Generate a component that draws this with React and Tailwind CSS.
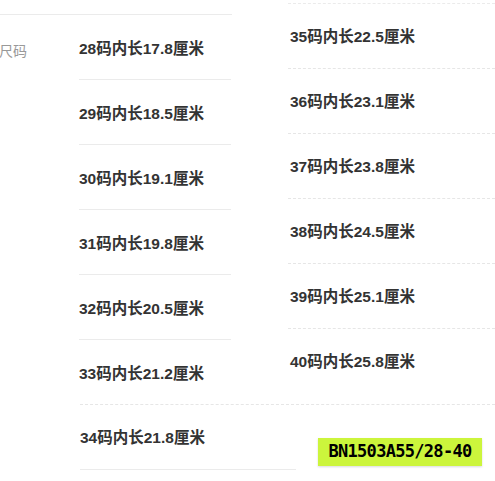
import React from "react";

const leftRows = ["28码内长17.8厘米", "29码内长18.5厘米", "30码内长19.1厘米", "31码内长19.8厘米", "32码内长20.5厘米", "33码内长21.2厘米"];
const rightRows = ["35码内长22.5厘米", "36码内长23.1厘米", "37码内长23.8厘米", "38码内长24.5厘米", "39码内长25.1厘米", "40码内长25.8厘米"];

const font = { fontFamily: '"Liberation Sans", "Noto Sans CJK SC", sans-serif' };

export default function App() {
  return (
    <div className="w-[495px] h-[481px] bg-white overflow-hidden text-[#333]" style={font}>
      <div className="flex h-[404px]">
        <div className="w-[232px] mt-[14px] border-t border-[#ebebeb] flex">
          <div className="w-[80px] pt-[27px] text-[14px] leading-[18px] text-[#999] -ml-px">尺码</div>
          <div className="w-[152px] flex flex-col">
            {leftRows.map((t, i) => (
              <div
                key={t}
                className={
                  i < 5
                    ? "h-[65px] shrink-0 border-b border-[#ebebeb] flex items-center pt-[3px] text-[15.5px] font-bold"
                    : "h-[64px] shrink-0 flex items-center pt-[3px] text-[15.5px] font-bold"
                }
              >
                {t}
              </div>
            ))}
          </div>
        </div>
        <div className="ml-[56px] w-[207px] mt-[3px] border-t border-dashed border-[#ebebeb] flex flex-col">
          {rightRows.map((t, i) => (
            <div
              key={t}
              className={
                i < 5
                  ? "h-[65px] shrink-0 border-b border-dashed border-[#e6e6e6] flex items-center pl-[2px] pt-[1px] text-[15.5px] font-bold"
                  : "h-[65px] shrink-0 flex items-center pl-[2px] text-[15.5px] font-bold"
              }
            >
              {t}
            </div>
          ))}
        </div>
      </div>
      <div className="ml-[80px] w-[415px] border-t border-dashed border-[#e6e6e6]"></div>
      <div className="flex">
        <div className="ml-[80px] w-[216px] h-[65px] border-b border-[#ebebeb] flex items-center pt-[2px] text-[15.5px] font-bold">
          34码内长21.8厘米
        </div>
        <div
          className="ml-[22px] mt-[33px] w-[164px] h-[28px] bg-[#ccf53c] flex items-center justify-center text-black font-bold text-[17px] tracking-[-0.7px] shadow-[0_1px_2px_rgba(0,0,0,0.15)]"
          style={{ fontFamily: '"DejaVu Sans Mono", monospace' }}
        >
          BN1503A55/28-40
        </div>
      </div>
    </div>
  );
}
